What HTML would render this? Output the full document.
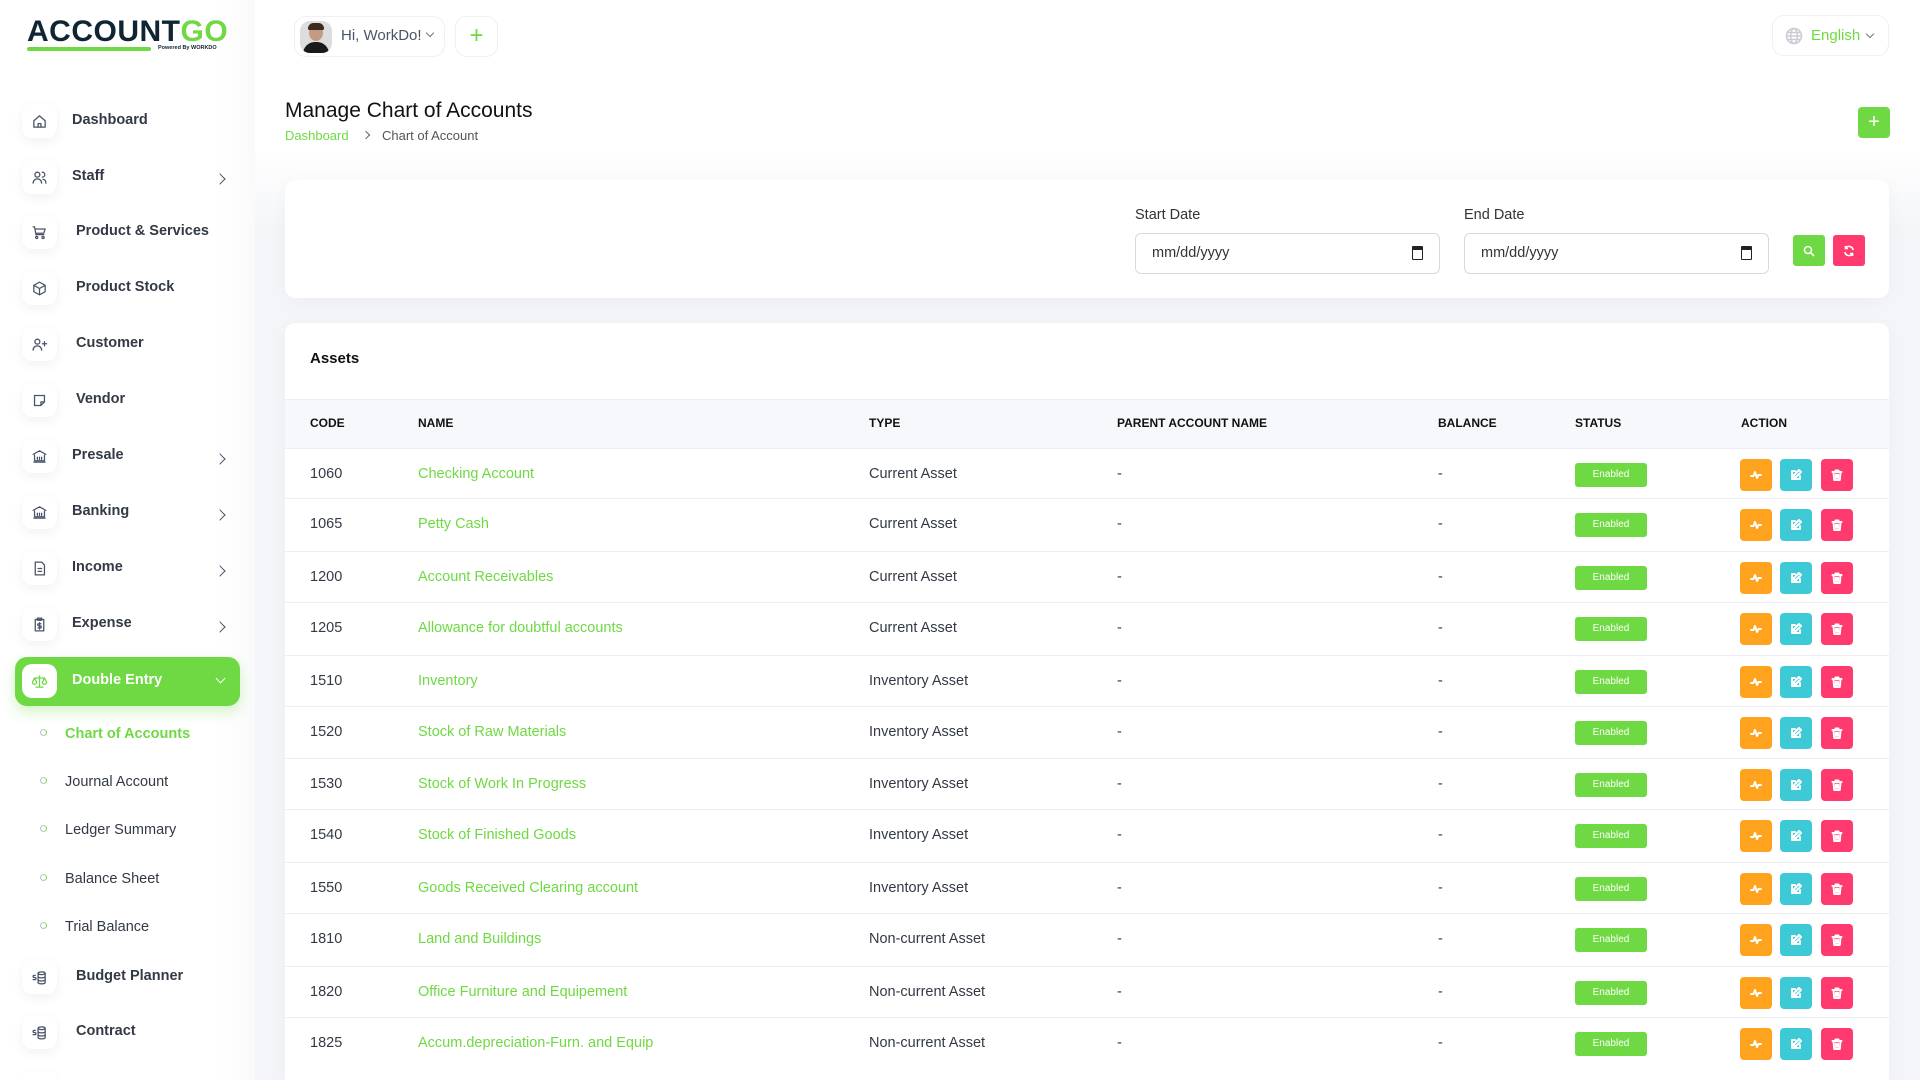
<!DOCTYPE html>
<html style="width:1920px;height:1080px;overflow:hidden"><head><meta charset="utf-8"><style>
*{box-sizing:border-box;margin:0;padding:0}
body{width:1920px;height:1080px;overflow:hidden;font-family:"Liberation Sans",sans-serif;background:linear-gradient(#fff 0,#fff 150px,#f4f5f8 230px,#f4f5f8);position:relative;color:#293240}
.abs{position:absolute}
.side{position:absolute;left:0;top:0;width:255px;height:1080px;background:linear-gradient(90deg,#fff 85%,#fafafb)}
.ib{position:absolute;left:22px;width:35px;height:34px;border-radius:10px;background:#fff;box-shadow:0 4px 12px rgba(0,0,0,.06);display:flex;align-items:center;justify-content:center}
.ib svg{width:17px;height:17px;stroke:#4a5468;fill:none;stroke-width:1.8;stroke-linecap:round;stroke-linejoin:round}
.st{position:absolute;font-size:14.5px;font-weight:bold;color:#333a45}
.chev{position:absolute;left:216px;width:8px;height:8px;border-right:1.6px solid #4a5468;border-bottom:1.6px solid #4a5468;transform:rotate(-45deg)}
.sub{position:absolute;left:65px;font-size:14.5px;color:#333a45}
.dot{position:absolute;left:40px;width:7px;height:7px;border-radius:50%;border:1.5px solid #b9c0cc;border-right-color:#6fd943}
.card{position:absolute;background:#fff;border-radius:10px;box-shadow:0 4px 20px rgba(0,0,0,.03)}
.th{position:absolute;top:416px;font-size:12px;font-weight:bold;color:#111}
.row{position:absolute;left:285px;width:1604px;height:52px;border-top:1px solid #eceef2;font-size:14.5px;color:#333a45}
.row span{position:absolute;top:17px}
.g{color:#6fd943}
.badge{position:absolute;left:1290px;top:14px;width:72px;height:24px;border-radius:3px;background:#6fd943;color:#fff;font-size:10px;text-align:center;line-height:24px}
.ab{position:absolute;top:10px;width:32px;height:32px;border-radius:4px;display:flex;align-items:center;justify-content:center}
.ab svg{width:14px;height:14px;fill:none;stroke:#fff;stroke-width:2;stroke-linecap:round;stroke-linejoin:round}
.inp{position:absolute;top:233px;width:305px;height:41px;border:1px solid #d6d9df;border-radius:6px;font-size:14.5px;color:#333;padding:11px 16px}
.inp i{position:absolute;right:16px;top:12px;width:11px;height:14px;border:1.5px solid #222;border-top-width:4px;border-radius:1px}
</style></head><body>
<div class="side"></div>
<div class="abs" style="left:27px;top:15px;font-size:30px;font-weight:900;letter-spacing:.5px;color:#0f2533">ACCOUNT<span style="color:#6fd943">GO</span></div>
<div class="abs" style="left:27px;top:47px;width:124px;height:4px;background:#6fd943;border-radius:2px"></div>
<div class="abs" style="left:158px;top:45px;font-size:5.5px;color:#0f2533;font-weight:bold">Powered By WORKDO</div>
<div class="abs" style="left:294px;top:16px;width:151px;height:41px;border:1px solid #eef0f3;border-radius:12px;background:#fff"></div>
<div class="abs" style="left:300px;top:21px;width:32px;height:32px;border-radius:10px;background:#ddd;overflow:hidden"><div style="position:absolute;left:9px;top:4px;width:14px;height:16px;border-radius:50%;background:#c49a80"></div><div style="position:absolute;left:8px;top:2px;width:16px;height:7px;border-radius:8px 8px 2px 2px;background:#3a2a20"></div><div style="position:absolute;left:3px;top:21px;width:26px;height:14px;border-radius:12px 12px 0 0;background:#1a1a1a"></div></div>
<div class="abs" style="left:341px;top:27px;font-size:15px;color:#4a5468">Hi, WorkDo!</div>
<div class="abs" style="left:427px;top:30px;width:6px;height:6px;border-right:1.3px solid #777;border-bottom:1.3px solid #777;transform:rotate(45deg)"></div>
<div class="abs" style="left:455px;top:16px;width:43px;height:41px;border:1px solid #eef0f3;border-radius:12px;background:#fff;color:#6fd943;font-size:24px;text-align:center;line-height:38px">+</div>
<div class="abs" style="left:1772px;top:15px;width:117px;height:41px;border:1px solid #eef0f3;border-radius:12px;background:#fff"></div>
<svg class="abs" style="left:1785px;top:27px" width="18" height="18" viewBox="0 0 18 18" fill="none" stroke="#c9ccd2" stroke-width="1.5"><circle cx="9" cy="9" r="7.5"/><ellipse cx="9" cy="9" rx="3.3" ry="7.5"/><path d="M1.5 9h15M2.5 5.5h13M2.5 12.5h13"/></svg>
<div class="abs" style="left:1811px;top:27px;font-size:15px;color:#6fd943">English</div>
<div class="abs" style="left:1867px;top:31px;width:6px;height:6px;border-right:1.3px solid #777;border-bottom:1.3px solid #777;transform:rotate(45deg)"></div>

<div class="ib" style="top:104px"><svg viewBox="0 0 24 24"><path d="M4 11l8-7 8 7v9H4z"/><path d="M10 20v-5h4v5"/></svg></div><div class="st" style="left:72px;top:112px">Dashboard</div>
<div class="ib" style="top:160px"><svg viewBox="0 0 24 24"><circle cx="9" cy="8" r="3.5"/><path d="M3 20c0-4 3-6 6-6s6 2 6 6M16 4.5a3.5 3.5 0 010 7M21 20c0-3-1.5-5-4-5.5"/></svg></div><div class="st" style="left:72px;top:168px">Staff</div><div class="chev" style="top:175px"></div>
<div class="ib" style="top:215px"><svg viewBox="0 0 24 24"><path d="M3 4h2l2 11h11M7 7h13l-2 6H8"/><circle cx="8" cy="19" r="1.5"/><circle cx="17" cy="19" r="1.5"/></svg></div><div class="st" style="left:76px;top:223px">Product &amp; Services</div>
<div class="ib" style="top:271px"><svg viewBox="0 0 24 24"><path d="M12 3l8 4.5v9L12 21l-8-4.5v-9zM4 7.5l8 4.5 8-4.5M12 12v9"/></svg></div><div class="st" style="left:76px;top:279px">Product Stock</div>
<div class="ib" style="top:327px"><svg viewBox="0 0 24 24"><circle cx="9" cy="8" r="3.5"/><path d="M3 20c0-4 3-6 6-6s6 2 6 6M19 8v6M16 11h6"/></svg></div><div class="st" style="left:76px;top:335px">Customer</div>
<div class="ib" style="top:383px"><svg viewBox="0 0 24 24"><path d="M5 5h14v9l-5 5H5zM14 19v-5h5"/></svg></div><div class="st" style="left:76px;top:391px">Vendor</div>
<div class="ib" style="top:439px"><svg viewBox="0 0 24 24"><path d="M3 9l9-5 9 5M4 20h16M5 10v8h14v-8M9 13v3M12 13v3M15 13v3"/></svg></div><div class="st" style="left:72px;top:447px">Presale</div><div class="chev" style="top:455px"></div>
<div class="ib" style="top:495px"><svg viewBox="0 0 24 24"><path d="M3 9l9-5 9 5M4 20h16M5 10v8h14v-8M9 13v3M12 13v3M15 13v3"/></svg></div><div class="st" style="left:72px;top:503px">Banking</div><div class="chev" style="top:511px"></div>
<div class="ib" style="top:551px"><svg viewBox="0 0 24 24"><path d="M6 3h9l4 4v14H6zM10 12h5M10 16h5"/></svg></div><div class="st" style="left:72px;top:559px">Income</div><div class="chev" style="top:567px"></div>
<div class="ib" style="top:607px"><svg viewBox="0 0 24 24"><path d="M6 5h12v16H6zM9 3h6v3H9zM14 11h-3a1.5 1.5 0 000 3h2a1.5 1.5 0 010 3h-3M12 9.5v9"/></svg></div><div class="st" style="left:72px;top:615px">Expense</div><div class="chev" style="top:623px"></div>
<div class="abs" style="left:15px;top:657px;width:225px;height:49px;border-radius:12px;background:#6fd943;box-shadow:0 6px 14px rgba(111,217,67,.3)"></div>
<div class="ib" style="top:664px;box-shadow:none"><svg viewBox="0 0 24 24" style="stroke:#6fd943"><path d="M12 4v16M7 20h10M5 7h14M5 7l-3 6a3 3 0 006 0zM19 7l-3 6a3 3 0 006 0z"/></svg></div>
<div class="st" style="left:72px;top:672px;color:#fff">Double Entry</div>
<div class="abs" style="left:217px;top:675px;width:7px;height:7px;border-right:1.6px solid #fff;border-bottom:1.6px solid #fff;transform:rotate(45deg)"></div>
<div class="dot" style="top:729px"></div><div class="sub" style="top:726px;color:#6fd943;font-weight:bold">Chart of Accounts</div>
<div class="dot" style="top:777px"></div><div class="sub" style="top:774px">Journal Account</div>
<div class="dot" style="top:825px"></div><div class="sub" style="top:822px">Ledger Summary</div>
<div class="dot" style="top:874px"></div><div class="sub" style="top:871px">Balance Sheet</div>
<div class="dot" style="top:922px"></div><div class="sub" style="top:919px">Trial Balance</div>
<div class="ib" style="top:960px"><svg viewBox="0 0 24 24"><ellipse cx="15" cy="6" rx="5" ry="2"/><path d="M10 6v13c0 1 2 2 5 2s5-1 5-2V6M10 10.5c0 1 2 2 5 2s5-1 5-2M10 15c0 1 2 2 5 2s5-1 5-2M6 9H4.5a1.3 1.3 0 000 3h1a1.3 1.3 0 010 3H3"/></svg></div><div class="st" style="left:76px;top:968px">Budget Planner</div>
<div class="ib" style="top:1015px"><svg viewBox="0 0 24 24"><ellipse cx="15" cy="6" rx="5" ry="2"/><path d="M10 6v13c0 1 2 2 5 2s5-1 5-2V6M10 10.5c0 1 2 2 5 2s5-1 5-2M10 15c0 1 2 2 5 2s5-1 5-2M6 9H4.5a1.3 1.3 0 000 3h1a1.3 1.3 0 010 3H3"/></svg></div><div class="st" style="left:76px;top:1023px">Contract</div>
<div class="ib" style="top:1071px;height:9px;border-radius:10px 10px 0 0"></div>

<div class="abs" style="left:285px;top:99px;font-size:21px;color:#111">Manage Chart of Accounts</div>
<div class="abs" style="left:285px;top:128px;font-size:13px;color:#6fd943">Dashboard</div>
<div class="abs" style="left:363px;top:132px;width:6px;height:6px;border-right:1.2px solid #666;border-top:1.2px solid #666;transform:rotate(45deg)"></div>
<div class="abs" style="left:382px;top:128px;font-size:13px;color:#555">Chart of Account</div>
<div class="abs" style="left:1858px;top:107px;width:32px;height:31px;border-radius:4px;background:#6fd943;color:#fff;font-size:20px;text-align:center;line-height:30px">+</div>

<div class="card" style="left:285px;top:180px;width:1604px;height:118px"></div>
<div class="abs" style="left:1135px;top:207px;font-size:14.5px;color:#333">Start Date</div>
<div class="abs" style="left:1464px;top:207px;font-size:14.5px;color:#333">End Date</div>
<div class="inp" style="left:1135px">mm/dd/yyyy<i></i></div>
<div class="inp" style="left:1464px">mm/dd/yyyy<i></i></div>
<div class="abs" style="left:1793px;top:235px;width:32px;height:31px;border-radius:3px;background:#6fd943;display:flex;align-items:center;justify-content:center"><svg width="12" height="12" viewBox="0 0 12 12" fill="none" stroke="#fff" stroke-width="1.6"><circle cx="5" cy="5" r="3.5"/><path d="M7.5 7.5L11 11"/></svg></div>
<div class="abs" style="left:1833px;top:235px;width:32px;height:31px;border-radius:3px;background:#ff3a6e;display:flex;align-items:center;justify-content:center"><svg width="12" height="12" viewBox="0 0 12 12" fill="none" stroke="#fff" stroke-width="1.6"><path d="M10 5A4 4 0 002.5 3.5M2 7a4 4 0 007.5 1.5M2.5 1v2.5H5M9.5 11V8.5H7"/></svg></div>

<div class="card" style="left:285px;top:323px;width:1604px;height:757px;overflow:hidden;border-radius:10px 10px 0 0">
<div style="position:absolute;left:25px;top:27px;font-size:15px;font-weight:bold;color:#111">Assets</div>
<div style="position:absolute;left:0;top:76px;width:100%;height:50px;background:#f7f8fb;border-top:1px solid #eceef2"></div>
</div>
<div class="th" style="left:310px">CODE</div><div class="th" style="left:418px">NAME</div><div class="th" style="left:869px">TYPE</div><div class="th" style="left:1117px">PARENT ACCOUNT NAME</div><div class="th" style="left:1438px">BALANCE</div><div class="th" style="left:1575px">STATUS</div><div class="th" style="left:1741px">ACTION</div>
<div id="rows"></div>
<script>
var d=[["1060","Checking Account","Current Asset"],["1065","Petty Cash","Current Asset"],["1200","Account Receivables","Current Asset"],["1205","Allowance for doubtful accounts","Current Asset"],["1510","Inventory","Inventory Asset"],["1520","Stock of Raw Materials","Inventory Asset"],["1530","Stock of Work In Progress","Inventory Asset"],["1540","Stock of Finished Goods","Inventory Asset"],["1550","Goods Received Clearing account","Inventory Asset"],["1810","Land and Buildings","Non-current Asset"],["1820","Office Furniture and Equipement","Non-current Asset"],["1825","Accum.depreciation-Furn. and Equip","Non-current Asset"]];
var tops=[448,498,551,602,655,706,758,809,862,913,966,1017],h="";
d.forEach(function(r,i){var hh=(i==11)?63:52;h+='<div class="row" style="top:'+tops[i]+'px;height:'+hh+'px"><span style="left:25px">'+r[0]+'</span><span class="g" style="left:133px">'+r[1]+'</span><span style="left:584px">'+r[2]+'</span><span style="left:832px">-</span><span style="left:1153px">-</span><div class="badge">Enabled</div>'+
'<div class="ab" style="left:1455px;background:#ffa21d"><svg viewBox="0 0 14 14"><path d="M2 8h2.5l1.5-4 2 6 1.5-3H12"/></svg></div>'+
'<div class="ab" style="left:1495px;background:#3ec9d6"><svg viewBox="0 0 14 14"><path d="M6 3H3v8h8V8M10 2l2 2-5 5H5V7z"/></svg></div>'+
'<div class="ab" style="left:1536px;background:#ff3a6e"><svg viewBox="0 0 14 14"><path d="M2.5 4h9M5.5 4V2.5h3V4M3.5 4l.7 8h5.6l.7-8M6 6.5v3.5M8 6.5v3.5"/></svg></div></div>';});
document.getElementById("rows").innerHTML=h;
</script>
</body></html>
